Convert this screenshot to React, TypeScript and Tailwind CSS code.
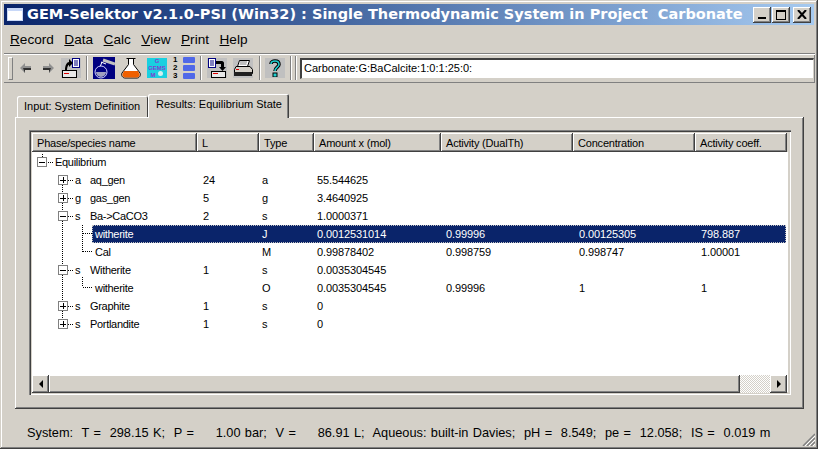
const raised = "shadow-[inset_-1px_-1px_0_#404040,inset_1px_1px_0_#ffffff,inset_-2px_-2px_0_#808080]";

const menus = [
  ["R", "ecord"],
  ["D", "ata"],
  ["C", "alc"],
  ["V", "iew"],
  ["P", "rint"],
  ["H", "elp"],
];

const columns = ["Phase/species name", "L", "Type", "Amount x (mol)", "Activity (DualTh)", "Concentration", "Activity coeff."];

type Row = {
  x: string;
  tag?: string;
  name: string;
  l?: string;
  type?: string;
  amount?: string;
  activity?: string;
  conc?: string;
  coeff?: string;
  selected?: boolean;
};

const rows: Row[] = [
  { x: "pl-[23px]", name: "Equilibrium" },
  { x: "pl-[43px]", tag: "a", name: "aq_gen", l: "24", type: "a", amount: "55.544625" },
  { x: "pl-[43px]", tag: "g", name: "gas_gen", l: "5", type: "g", amount: "3.4640925" },
  { x: "pl-[43px]", tag: "s", name: "Ba->CaCO3", l: "2", type: "s", amount: "1.0000371" },
  { x: "pl-[63px]", name: "witherite", type: "J", amount: "0.0012531014", activity: "0.99996", conc: "0.00125305", coeff: "798.887", selected: true },
  { x: "pl-[63px]", name: "Cal", type: "M", amount: "0.99878402", activity: "0.998759", conc: "0.998747", coeff: "1.00001" },
  { x: "pl-[43px]", tag: "s", name: "Witherite", l: "1", type: "s", amount: "0.0035304545" },
  { x: "pl-[63px]", name: "witherite", type: "O", amount: "0.0035304545", activity: "0.99996", conc: "1", coeff: "1" },
  { x: "pl-[43px]", tag: "s", name: "Graphite", l: "1", type: "s", amount: "0" },
  { x: "pl-[43px]", tag: "s", name: "Portlandite", l: "1", type: "s", amount: "0" },
];

function Expander({ x, y, open }: { x: number; y: number; open?: boolean }) {
  return (
    <g>
      <rect x={x + 0.5} y={y + 0.5} width="9" height="9" fill="#fff" stroke="#808080" />
      <path d={`M${x + 2} ${y + 5.5}h6`} stroke="#000" shapeRendering="crispEdges" />
      {!open && <path d={`M${x + 5.5} ${y + 2}v6`} stroke="#000" shapeRendering="crispEdges" />}
    </g>
  );
}

// connectors and +/- boxes, coordinates are relative to the tree body
function TreeLines() {
  const dots = { stroke: "#000", strokeDasharray: "1 1", shapeRendering: "crispEdges" as const };
  const centers = [28, 46, 64, 118, 154, 172];
  return (
    <svg className="absolute left-0 top-0 pointer-events-none" width="120" height="190">
      <path d="M10.5 2v4M16 10.5h5" {...dots} />
      <path d="M30.5 33v140" {...dots} />
      {centers.map((c) => (
        <path key={c} d={`M36 ${c + 0.5}h5`} {...dots} />
      ))}
      <path d="M50.5 73v27M50.5 81.5h9M50.5 99.5h9M50.5 125v10M50.5 135.5h9" {...dots} />
      <Expander x={5} y={5} open />
      <Expander x={26} y={23} />
      <Expander x={26} y={41} />
      <Expander x={26} y={59} open />
      <Expander x={26} y={113} open />
      <Expander x={26} y={149} />
      <Expander x={26} y={167} />
    </svg>
  );
}

function ToolButton({ children, className = "" }: { children: React.ReactNode; className?: string }) {
  return <div className={`flex items-center justify-center shrink-0 ${className}`}>{children}</div>;
}

function Separator({ className = "" }: { className?: string }) {
  return <div className={`w-[2px] h-[24px] shrink-0 border-l border-l-[#808080] border-r border-r-white ${className}`} />;
}

function BackIcon({ flip }: { flip?: boolean }) {
  return (
    <svg width="12" height="10" viewBox="0 0 12 10" className={flip ? "-scale-x-100" : ""}>
      <path d="M0 5 5 0v3h6v4H5v3z" fill="#909090" />
      <path d="M5 10V7h6V5H3z" fill="#303030" />
    </svg>
  );
}

function ExportIcon() {
  return (
    <div className="w-[20px] h-[20px] bg-[#c0c0c0]">
      <svg width="20" height="20" viewBox="0 0 20 20">
        <rect x="11.500" y="0.500" width="7" height="9" fill="#fff" stroke="#000080" />
        <path d="M13 3h4M13 5h4M13 7h4" stroke="#000080" />
        <path d="M4 12C4 7 6 4 8 4V1l4 4-4 4V7C7 7 6 9 6 12z" fill="#000" />
        <rect x="1.500" y="12.500" width="14" height="7" fill="#e8e8e8" stroke="#000" />
        <rect x="3" y="15" width="5" height="1" fill="#e00000" />
      </svg>
    </div>
  );
}

function ImportIcon() {
  return (
    <div className="w-[20px] h-[20px] bg-[#c0c0c0]">
      <svg width="20" height="20" viewBox="0 0 20 20">
        <rect x="1.500" y="0.500" width="7" height="9" fill="#fff" stroke="#000080" />
        <path d="M3 3h4M3 5h4M3 7h4" stroke="#000080" />
        <path d="M9 3h6c1 0 2 1 2 2v4h2l-3.500 4L12 9h2V6H9z" fill="#000" />
        <rect x="4.500" y="13.500" width="14" height="6" fill="#e8e8e8" stroke="#000" />
        <rect x="6" y="15" width="5" height="1" fill="#e00000" />
      </svg>
    </div>
  );
}

function BlueFlask() {
  return (
    <div className="w-[22px] h-[22px] bg-[#000080]">
      <svg width="22" height="22" viewBox="0 0 22 22">
        <path d="M10 3 22 7" stroke="#c0c0c0" strokeWidth="3" />
        <path d="M9 5 7 10" stroke="#fff" />
        <path d="M8 5 13 7" stroke="#fff" />
        <circle cx="8" cy="15" r="6" fill="#000080" stroke="#d0d0ff" />
        <path d="M3 15a5 5 0 0 0 10 0z" fill="#a0a0c0" />
      </svg>
    </div>
  );
}

function OrangeFlask() {
  return (
    <svg width="22" height="22" viewBox="0 0 22 22">
      <path d="M6.500 1.500h9M8.500 1.500v6L2 16c-1 3 1 5 3 5h12c2 0 4-2 3-5L13.500 7.500v-6" fill="#fff" stroke="#000" />
      <path d="M4 14h14l1.500 3c.5 2-1 3.500-2.500 3.500H5C3.500 20.500 2 19 2.500 17z" fill="#f06000" />
    </svg>
  );
}

function GemsIcon() {
  return (
    <div className="relative w-[20px] h-[20px] bg-[#19d0e0] overflow-hidden shrink-0">
      <div className="absolute inset-0 flex flex-col items-center text-[6px] leading-[7px] text-[#8040d0] font-bold">
        <span>G</span>
        <span>GEMS</span>
        <span className="pr-[8px]">M</span>
      </div>
      <div className="absolute right-[4px] bottom-[2px] w-[5px] h-[5px] rounded-full bg-[#d0f0f0]" />
    </div>
  );
}

function ListIcon() {
  return (
    <div className="w-[23px] flex items-center justify-between">
      <div className="flex flex-col pl-[1px] text-[8px] leading-[8px] font-bold text-black">
        <span>1</span>
        <span>2</span>
        <span>3</span>
      </div>
      <div className="flex flex-col gap-[2px]">
        <div className="w-[12px] h-[6px] rounded-[1px] bg-[#5068e8]" />
        <div className="w-[12px] h-[6px] rounded-[1px] bg-[#5068e8]" />
        <div className="w-[12px] h-[6px] rounded-[1px] bg-[#5068e8]" />
      </div>
    </div>
  );
}

function PrinterIcon() {
  return (
    <div className="w-[20px] h-[20px] bg-[#c0c0c0]">
      <svg width="20" height="20" viewBox="0 0 20 20">
        <path d="M6.500 2.500h10l-2 6h-10z" fill="#fff" stroke="#000" />
        <path d="M7 4h7M6.500 6h7" stroke="#808080" />
        <path d="M3 8.500h14l2.500 3v4h-18v-4z" fill="#d4d0c8" stroke="#000" />
        <rect x="1" y="14" width="18" height="4" fill="#202020" />
        <rect x="3" y="11" width="3" height="1" fill="#e00000" />
      </svg>
    </div>
  );
}

function HelpIcon() {
  return (
    <div className="w-[20px] h-[20px] bg-[#c0c0c0] flex items-center justify-center">
      <svg width="14" height="18" viewBox="0 0 14 18">
        <path d="M3 5c0-2 2-3 4-3s4 1 4 3.500S7 8.500 7 12" fill="none" stroke="#000" strokeWidth="3.500" />
        <path d="M3 5c0-2 2-3 4-3s4 1 4 3.500S7 8.500 7 12" fill="none" stroke="#20d0d0" strokeWidth="1.500" />
        <rect x="5" y="14" width="4" height="4" fill="#20d0d0" stroke="#000" />
      </svg>
    </div>
  );
}

function CaptionButton({ children }: { children: React.ReactNode }) {
  return (
    <div className={`w-[18px] h-[16px] bg-[#d4d0c8] flex items-center justify-center ${raised}`}>
      {children}
    </div>
  );
}

function ScrollButton({ left }: { left?: boolean }) {
  return (
    <div className={`w-[17px] h-[18px] shrink-0 bg-[#d4d0c8] flex items-center justify-center ${raised}`}>
      <div
        className={
          left
            ? "border-y-[4px] border-y-transparent border-r-[4px] border-r-black"
            : "border-y-[4px] border-y-transparent border-l-[4px] border-l-black"
        }
      />
    </div>
  );
}

export default function App() {
  return (
    <div className="w-[818px] h-[449px] overflow-hidden bg-[#d4d0c8] flex flex-col p-[4px] font-['Liberation_Sans',sans-serif] text-black shadow-[inset_-1px_-1px_0_#404040,inset_1px_1px_0_#d4d0c8,inset_-2px_-2px_0_#808080,inset_2px_2px_0_#ffffff]">
      {/* Title bar */}
      <div className="h-[21px] shrink-0 flex items-center bg-gradient-to-r from-[#0a246a] to-[#a6caf0] pl-[3px] pr-[3px]">
        <svg width="16" height="13" className="shrink-0" viewBox="0 0 16 13">
          <rect width="16" height="13" fill="#c8d8f8" />
          <rect x="1" y="3" width="14" height="9" fill="#fff" />
        </svg>
        <span className="ml-[4px] pt-[1px] text-white font-bold text-[14.500px] whitespace-pre font-['DejaVu_Sans',sans-serif]">
          GEM-Selektor v2.1.0-PSI (Win32) : Single Thermodynamic System in Project  Carbonate
        </span>
        <div className="ml-auto flex items-center">
          <CaptionButton>
            <div className="w-[8px] h-[2px] bg-black mt-[7px]" />
          </CaptionButton>
          <div className="ml-[1px]">
            <CaptionButton>
              <div className="w-[10px] h-[10px] border border-black border-t-2" />
            </CaptionButton>
          </div>
          <div className="ml-[3px]">
            <CaptionButton>
              <svg width="10" height="9" viewBox="0 0 10 9">
                <path d="M1 0 9 9M9 0 1 9" stroke="#000" strokeWidth="2" />
              </svg>
            </CaptionButton>
          </div>
        </div>
      </div>

      {/* Menu */}
      <div className="h-[28px] shrink-0 flex items-center pt-[3px] pl-[6px] gap-[10.500px] text-[13.600px] text-black">
        {menus.map((m) => (
          <span key={m[0]} className="whitespace-pre">
            <u>{m[0]}</u>
            {m[1]}
          </span>
        ))}
      </div>

      {/* Toolbar */}
      <div className="h-[30px] shrink-0 mr-[-1px] flex items-center shadow-[inset_0_1px_0_#808080,inset_0_2px_0_#ffffff,inset_0_-1px_0_#808080,inset_-1px_0_0_#808080]">
        <div className="w-[5px] h-[23px] ml-[4px] mr-[7px] shrink-0 bg-[#d4d0c8] border border-[#808080] border-l-white border-t-white" />
        <ToolButton className="w-[12px]">
          <BackIcon />
        </ToolButton>
        <ToolButton className="w-[12px] ml-[10px]">
          <BackIcon flip />
        </ToolButton>
        <ToolButton className="ml-[7px]">
          <ExportIcon />
        </ToolButton>
        <Separator className="ml-[5px]" />
        <ToolButton className="ml-[5px]">
          <BlueFlask />
        </ToolButton>
        <ToolButton className="ml-[5px]">
          <OrangeFlask />
        </ToolButton>
        <ToolButton className="ml-[5px]">
          <GemsIcon />
        </ToolButton>
        <ToolButton className="ml-[5px]">
          <ListIcon />
        </ToolButton>
        <Separator className="ml-[5px]" />
        <ToolButton className="ml-[5px]">
          <ImportIcon />
        </ToolButton>
        <ToolButton className="ml-[6px]">
          <PrinterIcon />
        </ToolButton>
        <Separator className="ml-[6px]" />
        <ToolButton className="ml-[4px]">
          <HelpIcon />
        </ToolButton>
        <Separator className="ml-[5px]" />
        <Separator className="ml-[3px]" />
        <div className="ml-[3px] mr-[1px] flex-1 h-[21px] bg-white flex items-center pl-[2px] text-[11px] border-t-2 border-l-2 border-t-[#404040] border-l-[#404040] border-b border-r border-b-[#d4d0c8] border-r-[#d4d0c8]">
          Carbonate:G:BaCalcite:1:0:1:25:0:
        </div>
      </div>

      {/* Tabs */}
      <div className="flex items-end h-[34px] shrink-0 pl-[13px] text-[11px]">
        <div className="w-[131px] h-[21px] flex items-center pl-[7px] bg-[#d4d0c8] rounded-t-[2px] shadow-[inset_1px_1px_0_#ffffff,inset_-1px_0_0_#404040]">
          Input: System Definition
        </div>
        <div className="relative z-10 w-[141px] h-[24px] mb-[-1px] pb-[3px] flex items-center pl-[8px] bg-[#d4d0c8] rounded-t-[2px] shadow-[inset_1px_1px_0_#ffffff,inset_-1px_0_0_#404040,inset_-2px_0_0_#808080]">
          Results: Equilibrium State
        </div>
      </div>

      {/* Tab panel */}
      <div className="ml-[11px] mr-[10px] h-[292px] shrink-0 pt-[13px] pl-[14px] pr-[13px] shadow-[inset_-1px_-1px_0_#404040,inset_1px_1px_0_#ffffff,inset_-2px_-2px_0_#808080]">
        <div className="h-[265px] flex flex-col bg-white p-[3px] pb-[2px] pr-[2px] shadow-[inset_1px_1px_0_#808080,inset_2px_2px_0_#404040,inset_-1px_-1px_0_#ffffff,inset_-2px_-2px_0_#d4d0c8,inset_-3px_-3px_0_#d4d0c8,inset_3px_3px_0_#d4d0c8]">
          <div className="grid grid-cols-[165px_62px_55px_127px_132px_122px_92px] h-[19px] shrink-0 text-[11px] tracking-[-0.2px] bg-[#d4d0c8]">
            {columns.map((c) => (
              <div key={c} className={`flex items-center pt-[1px] pl-[5px] whitespace-nowrap overflow-hidden ${raised}`}>
                {c}
              </div>
            ))}
          </div>
          <div className="relative flex-1 pt-[1px] text-[11px] overflow-hidden">
            <TreeLines />
            {rows.map((r, i) => (
              <div key={i} className="grid grid-cols-[165px_62px_55px_127px_132px_122px_92px] h-[18px] items-center whitespace-nowrap tracking-[-0.1px]">
                <div className={`flex tracking-[-0.3px] ${r.x}`}>
                  {r.tag && <span className="w-[15px] shrink-0">{r.tag}</span>}
                  <span>{!r.selected && r.name}</span>
                </div>
                <div className="pl-[6px]">{r.l}</div>
                <div className="pl-[3px]">{r.selected ? "" : r.type}</div>
                <div className="pl-[3px]">{r.selected ? "" : r.amount}</div>
                <div className="pl-[5px]">{r.selected ? "" : r.activity}</div>
                <div className="pl-[6px]">{r.selected ? "" : r.conc}</div>
                <div className="pl-[6px]">{r.selected ? "" : r.coeff}</div>
              </div>
            ))}
            {/* selected row is drawn over the grid */}
            <div className="absolute left-[60px] top-[73px] w-[694px] h-[18px] bg-[#0a246a] text-white text-[11px] tracking-[-0.1px] border border-dotted border-[#c0c0c0] grid grid-cols-[104px_62px_55px_127px_132px_122px_90px] items-center whitespace-nowrap">
              <div className="pl-[2px] tracking-[-0.3px]">witherite</div>
              <div />
              <div className="pl-[3px]">J</div>
              <div className="pl-[3px]">0.0012531014</div>
              <div className="pl-[5px]">0.99996</div>
              <div className="pl-[6px]">0.00125305</div>
              <div className="pl-[6px]">798.887</div>
            </div>
          </div>
          {/* Horizontal scrollbar */}
          <div className="flex h-[18px] shrink-0 mr-[2px]">
            <ScrollButton left />
            <div className="w-[691px] bg-[#d4d0c8] shadow-[inset_-1px_-1px_0_#404040,inset_1px_1px_0_#ffffff,inset_-2px_-2px_0_#808080]" />
            <div className="flex-1 bg-[repeating-conic-gradient(#d4d0c8_0_25%,#ffffff_0_50%)] bg-[length:2px_2px]" />
            <ScrollButton />
          </div>
        </div>
      </div>

      {/* Status line */}
      <div className="relative flex-1 flex items-center pt-[12px] pl-[23px] text-[12.750px] [word-spacing:0.82px] whitespace-pre">
        System:  T =  298.15 K;  P =     1.00 bar;  V =     86.91 L;  Aqueous: built-in Davies;  pH =  8.549;  pe =  12.058;  IS =  0.019 m
        <svg className="absolute right-[-1px] bottom-[-1px]" width="13" height="13" viewBox="0 0 13 13">
          <path d="M13 1 1 13M13 5 5 13M13 9 9 13" stroke="#808080" strokeWidth="1.500" />
          <path d="M13 3 3 13M13 7 7 13M13 11 11 13" stroke="#ffffff" />
        </svg>
      </div>
    </div>
  );
}
